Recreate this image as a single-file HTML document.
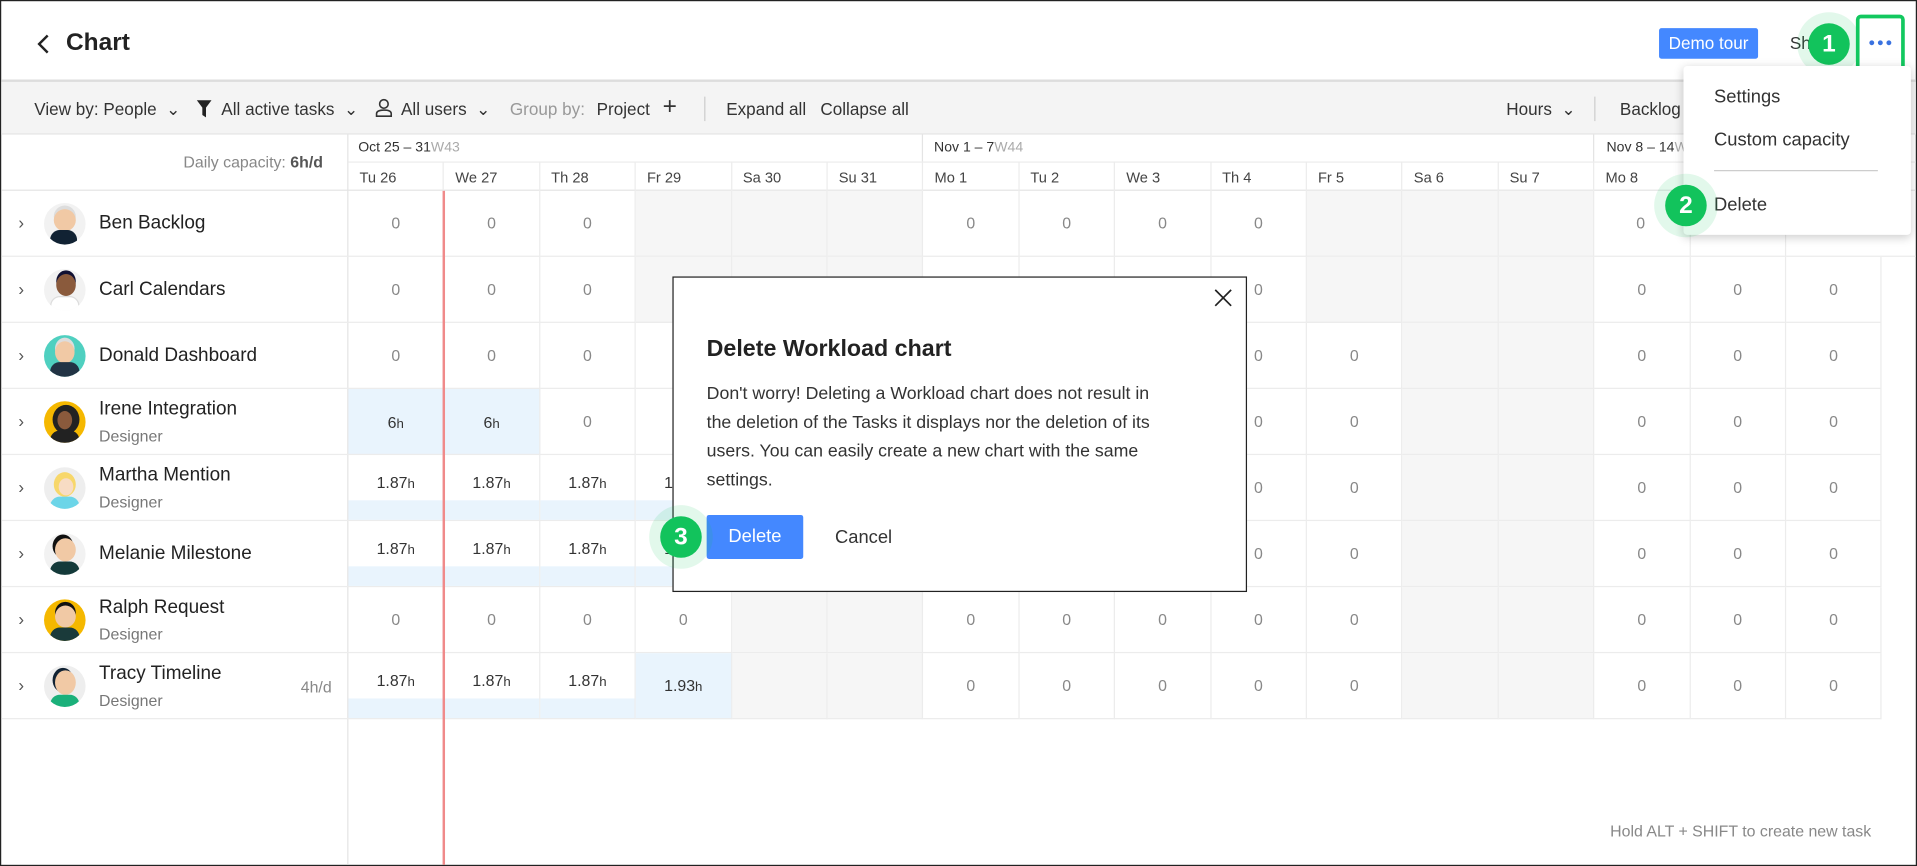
<!DOCTYPE html>
<html><head><meta charset="utf-8"><style>
*{box-sizing:border-box;margin:0;padding:0}
body{width:1917px;height:866px;overflow:hidden;background:#fff;font-family:"Liberation Sans",sans-serif;color:#222}
#w{position:absolute;left:0;top:0;width:1568px;height:708px;transform:scale(1.22258,1.2232);transform-origin:0 0;border:1px solid #222;overflow:hidden}
.a{position:absolute}
.t{position:absolute;white-space:nowrap}
.c{position:absolute;width:78.4px;height:54px;border-right:1px solid #ececec;border-bottom:1px solid #ececec;font-size:13px;color:#888;text-align:center;line-height:54px}
.g{background:#f6f6f6}
.b{background:#e9f4fd;color:#333}
.h{color:#333;line-height:46px}
.h::after{content:"";position:absolute;left:0;right:0;bottom:0;height:16px;background:#e9f4fd}
.d{position:absolute;top:131px;height:24px;width:78.4px;border-right:1px solid #ececec;font-size:12px;color:#444;padding-left:9px;line-height:26px}
.nm{position:absolute;left:80px;font-size:15.5px;color:#222}
.sub{position:absolute;left:80px;font-size:13px;color:#777}
.av{position:absolute;left:35px;width:34px;height:34px;border-radius:50%;overflow:hidden}
.chev{position:absolute;left:14px;font-size:14px;color:#555}
.num{position:absolute;width:34px;height:34px;border-radius:50%;background:#12c35c;color:#fff;font-weight:bold;font-size:20px;text-align:center;line-height:34px;box-shadow:0 0 0 9px rgba(18,195,92,.12)}
.tb{position:absolute;top:80px;font-size:14px;color:#333}
</style></head><body><div id="w">
<svg class="a" style="left:28px;top:26px" width="14" height="18"><path d="M10 2 L3 9 L10 16" stroke="#222" stroke-width="2" fill="none"/></svg>
<div class="t" style="left:53px;top:23px;font-size:20px;font-weight:bold">Chart</div>
<div class="a" style="left:1356px;top:22px;width:81px;height:25px;background:#4488ff;border-radius:2px;color:#fff;font-size:14px;text-align:center;line-height:25px">Demo tour</div>
<div class="t" style="left:1463px;top:26px;font-size:14px;color:#333">Sh</div>
<div class="num" style="left:1478px;top:18px">1</div>
<div class="a" style="left:1517px;top:11px;width:40px;height:46px;border:3px solid #12c85f;border-radius:4px;background:#fff"></div>
<svg class="a" style="left:1527px;top:31px" width="20" height="6"><circle cx="3" cy="3" r="2" fill="#3a72e0"/><circle cx="10" cy="3" r="2" fill="#3a72e0"/><circle cx="17" cy="3" r="2" fill="#3a72e0"/></svg>
<div class="a" style="left:0;top:64px;width:1568px;height:2px;background:#ddd"></div>
<div class="a" style="left:0;top:66px;width:1568px;height:43px;background:#f4f4f4;border-bottom:1px solid #e4e4e4"></div>
<div class="tb" style="left:27px">View by: People &nbsp;⌄</div>
<svg class="a" style="left:159px;top:80px" width="14" height="16"><path d="M1 1H13L8.5 7V15L5.5 13V7Z" fill="#222"/></svg>
<div class="tb" style="left:180px">All active tasks &nbsp;⌄</div>
<svg class="a" style="left:306px;top:79px" width="14" height="16"><circle cx="7" cy="5" r="3.5" stroke="#333" fill="none" stroke-width="1.3"/><path d="M1 15V13Q1 10 7 10Q13 10 13 13V15Z" stroke="#333" fill="none" stroke-width="1.3"/></svg>
<div class="tb" style="left:327px">All users &nbsp;⌄</div>
<div class="tb" style="left:416px;color:#999">Group by:</div>
<div class="tb" style="left:487px">Project</div>
<div class="tb" style="left:541px;font-size:20px;top:75px;color:#333">+</div>
<div class="a" style="left:575px;top:78px;width:1px;height:20px;background:#ccc"></div>
<div class="tb" style="left:593px">Expand all</div>
<div class="tb" style="left:670px">Collapse all</div>
<div class="tb" style="left:1231px">Hours &nbsp;⌄</div>
<div class="a" style="left:1303px;top:78px;width:1px;height:20px;background:#ccc"></div>
<div class="tb" style="left:1324px">Backlog l</div>
<div class="a" style="left:283px;top:109px;width:1px;height:600px;background:#e4e4e4"></div>
<div class="t" style="left:149px;top:124px;font-size:13px;color:#888">Daily capacity: <b style="color:#555">6h/d</b></div>
<div class="a" style="left:0;top:154px;width:1568px;height:1px;background:#e4e4e4"></div>
<div class="t" style="left:292px;top:114px;font-size:11.5px;color:#333">Oct 25 – 31<span style="color:#aaa">W43</span></div>
<div class="t" style="left:763px;top:114px;font-size:11.5px;color:#333">Nov 1 – 7<span style="color:#aaa">W44</span></div>
<div class="t" style="left:1313px;top:114px;font-size:11.5px;color:#333">Nov 8 – 14<span style="color:#aaa">W45</span></div>
<div class="a" style="left:753px;top:109px;width:1px;height:22px;background:#e4e4e4"></div>
<div class="a" style="left:1302px;top:109px;width:1px;height:22px;background:#e4e4e4"></div>
<div class="a" style="left:284px;top:131px;width:1284px;height:1px;background:#ececec"></div>
<div class="d" style="left:284px">Tu 26</div><div class="d" style="left:362.4px">We 27</div><div class="d" style="left:440.8px">Th 28</div><div class="d" style="left:519.2px">Fr 29</div><div class="d" style="left:597.6px">Sa 30</div><div class="d" style="left:676px">Su 31</div><div class="d" style="left:754.4px">Mo 1</div><div class="d" style="left:832.8px">Tu 2</div><div class="d" style="left:911.2px">We 3</div><div class="d" style="left:989.6px">Th 4</div><div class="d" style="left:1068px">Fr 5</div><div class="d" style="left:1146.4px">Sa 6</div><div class="d" style="left:1224.8px">Su 7</div><div class="d" style="left:1303.2px">Mo 8</div><div class="d" style="left:1381.6px">Tu 9</div><div class="d" style="left:1460px">We 10</div>
<div id="rows">
<div class="c" style="left:284px;top:155px">0</div><div class="c" style="left:362.4px;top:155px">0</div><div class="c" style="left:440.8px;top:155px">0</div><div class="c g" style="left:519.2px;top:155px"></div><div class="c g" style="left:597.6px;top:155px"></div><div class="c g" style="left:676px;top:155px"></div><div class="c" style="left:754.4px;top:155px">0</div><div class="c" style="left:832.8px;top:155px">0</div><div class="c" style="left:911.2px;top:155px">0</div><div class="c" style="left:989.6px;top:155px">0</div><div class="c g" style="left:1068px;top:155px"></div><div class="c g" style="left:1146.4px;top:155px"></div><div class="c g" style="left:1224.8px;top:155px"></div><div class="c" style="left:1303.2px;top:155px;text-align:right;padding-right:36px">0</div><div class="c" style="left:1381.6px;top:155px"></div><div class="c" style="left:1460px;top:155px;width:110px"></div>
<div class="c" style="left:284px;top:209px">0</div><div class="c" style="left:362.4px;top:209px">0</div><div class="c" style="left:440.8px;top:209px">0</div><div class="c g" style="left:519.2px;top:209px"></div><div class="c g" style="left:597.6px;top:209px"></div><div class="c g" style="left:676px;top:209px"></div><div class="c" style="left:754.4px;top:209px">0</div><div class="c" style="left:832.8px;top:209px">0</div><div class="c" style="left:911.2px;top:209px">0</div><div class="c" style="left:989.6px;top:209px">0</div><div class="c g" style="left:1068px;top:209px"></div><div class="c g" style="left:1146.4px;top:209px"></div><div class="c g" style="left:1224.8px;top:209px"></div><div class="c" style="left:1303.2px;top:209px">0</div><div class="c" style="left:1381.6px;top:209px">0</div><div class="c" style="left:1460px;top:209px">0</div>
<div class="c" style="left:284px;top:263px">0</div><div class="c" style="left:362.4px;top:263px">0</div><div class="c" style="left:440.8px;top:263px">0</div><div class="c" style="left:519.2px;top:263px"></div><div class="c g" style="left:597.6px;top:263px"></div><div class="c g" style="left:676px;top:263px"></div><div class="c" style="left:754.4px;top:263px">0</div><div class="c" style="left:832.8px;top:263px">0</div><div class="c" style="left:911.2px;top:263px">0</div><div class="c" style="left:989.6px;top:263px">0</div><div class="c" style="left:1068px;top:263px">0</div><div class="c g" style="left:1146.4px;top:263px"></div><div class="c g" style="left:1224.8px;top:263px"></div><div class="c" style="left:1303.2px;top:263px">0</div><div class="c" style="left:1381.6px;top:263px">0</div><div class="c" style="left:1460px;top:263px">0</div>
<div class="c b" style="left:284px;top:317px;line-height:56px">6<small>h</small></div><div class="c b" style="left:362.4px;top:317px;line-height:56px">6<small>h</small></div><div class="c" style="left:440.8px;top:317px">0</div><div class="c" style="left:519.2px;top:317px"></div><div class="c g" style="left:597.6px;top:317px"></div><div class="c g" style="left:676px;top:317px"></div><div class="c" style="left:754.4px;top:317px">0</div><div class="c" style="left:832.8px;top:317px">0</div><div class="c" style="left:911.2px;top:317px">0</div><div class="c" style="left:989.6px;top:317px">0</div><div class="c" style="left:1068px;top:317px">0</div><div class="c g" style="left:1146.4px;top:317px"></div><div class="c g" style="left:1224.8px;top:317px"></div><div class="c" style="left:1303.2px;top:317px">0</div><div class="c" style="left:1381.6px;top:317px">0</div><div class="c" style="left:1460px;top:317px">0</div>
<div class="c h" style="left:284px;top:371px">1.87<small>h</small></div><div class="c h" style="left:362.4px;top:371px">1.87<small>h</small></div><div class="c h" style="left:440.8px;top:371px">1.87<small>h</small></div><div class="c h" style="left:519.2px;top:371px">1.87<small>h</small></div><div class="c g" style="left:597.6px;top:371px"></div><div class="c g" style="left:676px;top:371px"></div><div class="c" style="left:754.4px;top:371px">0</div><div class="c" style="left:832.8px;top:371px">0</div><div class="c" style="left:911.2px;top:371px">0</div><div class="c" style="left:989.6px;top:371px">0</div><div class="c" style="left:1068px;top:371px">0</div><div class="c g" style="left:1146.4px;top:371px"></div><div class="c g" style="left:1224.8px;top:371px"></div><div class="c" style="left:1303.2px;top:371px">0</div><div class="c" style="left:1381.6px;top:371px">0</div><div class="c" style="left:1460px;top:371px">0</div>
<div class="c h" style="left:284px;top:425px">1.87<small>h</small></div><div class="c h" style="left:362.4px;top:425px">1.87<small>h</small></div><div class="c h" style="left:440.8px;top:425px">1.87<small>h</small></div><div class="c h" style="left:519.2px;top:425px">1.87<small>h</small></div><div class="c g" style="left:597.6px;top:425px"></div><div class="c g" style="left:676px;top:425px"></div><div class="c" style="left:754.4px;top:425px">0</div><div class="c" style="left:832.8px;top:425px">0</div><div class="c" style="left:911.2px;top:425px">0</div><div class="c" style="left:989.6px;top:425px">0</div><div class="c" style="left:1068px;top:425px">0</div><div class="c g" style="left:1146.4px;top:425px"></div><div class="c g" style="left:1224.8px;top:425px"></div><div class="c" style="left:1303.2px;top:425px">0</div><div class="c" style="left:1381.6px;top:425px">0</div><div class="c" style="left:1460px;top:425px">0</div>
<div class="c" style="left:284px;top:479px">0</div><div class="c" style="left:362.4px;top:479px">0</div><div class="c" style="left:440.8px;top:479px">0</div><div class="c" style="left:519.2px;top:479px">0</div><div class="c g" style="left:597.6px;top:479px"></div><div class="c g" style="left:676px;top:479px"></div><div class="c" style="left:754.4px;top:479px">0</div><div class="c" style="left:832.8px;top:479px">0</div><div class="c" style="left:911.2px;top:479px">0</div><div class="c" style="left:989.6px;top:479px">0</div><div class="c" style="left:1068px;top:479px">0</div><div class="c g" style="left:1146.4px;top:479px"></div><div class="c g" style="left:1224.8px;top:479px"></div><div class="c" style="left:1303.2px;top:479px">0</div><div class="c" style="left:1381.6px;top:479px">0</div><div class="c" style="left:1460px;top:479px">0</div>
<div class="c h" style="left:284px;top:533px">1.87<small>h</small></div><div class="c h" style="left:362.4px;top:533px">1.87<small>h</small></div><div class="c h" style="left:440.8px;top:533px">1.87<small>h</small></div><div class="c h" style="left:519.2px;top:533px;line-height:54px;background:#e9f4fd">1.93<small>h</small></div><div class="c g" style="left:597.6px;top:533px"></div><div class="c g" style="left:676px;top:533px"></div><div class="c" style="left:754.4px;top:533px">0</div><div class="c" style="left:832.8px;top:533px">0</div><div class="c" style="left:911.2px;top:533px">0</div><div class="c" style="left:989.6px;top:533px">0</div><div class="c" style="left:1068px;top:533px">0</div><div class="c g" style="left:1146.4px;top:533px"></div><div class="c g" style="left:1224.8px;top:533px"></div><div class="c" style="left:1303.2px;top:533px">0</div><div class="c" style="left:1381.6px;top:533px">0</div><div class="c" style="left:1460px;top:533px">0</div>
</div>
<div class="a" style="left:0;top:208px;width:284px;height:1px;background:#ececec"></div>
<div class="a" style="left:0;top:262px;width:284px;height:1px;background:#ececec"></div>
<div class="a" style="left:0;top:316px;width:284px;height:1px;background:#ececec"></div>
<div class="a" style="left:0;top:370px;width:284px;height:1px;background:#ececec"></div>
<div class="a" style="left:0;top:424px;width:284px;height:1px;background:#ececec"></div>
<div class="a" style="left:0;top:478px;width:284px;height:1px;background:#ececec"></div>
<div class="a" style="left:0;top:532px;width:284px;height:1px;background:#ececec"></div>
<div class="a" style="left:0;top:586px;width:284px;height:1px;background:#ececec"></div>
<div class="a" style="left:361px;top:155px;width:1.5px;height:560px;background:#f08a8a"></div>
<div class="chev" style="top:173px">›</div><div class="av" style="top:165px;background:#f2f2f2"><div class="a" style="left:8px;top:5px;width:18px;height:18px;border-radius:50%;background:#f1c9a5;box-shadow:0 -3px 0 #ddd"></div><div class="a" style="left:5px;top:22px;width:22px;height:14px;border-radius:8px 8px 0 0;background:#123"></div></div><div class="nm" style="top:173px">Ben Backlog</div>
<div class="chev" style="top:227px">›</div><div class="av" style="top:219px;background:#f2f2f2"><div class="a" style="left:10px;top:4px;width:16px;height:18px;border-radius:50%;background:#8a5a3c;box-shadow:0 -3px 0 #113"></div><div class="a" style="left:5px;top:22px;width:24px;height:14px;border-radius:8px 8px 0 0;background:#fff;border:1px solid #ddd"></div></div><div class="nm" style="top:227px">Carl Calendars</div>
<div class="chev" style="top:281px">›</div><div class="av" style="top:273px;background:#4fd0c0"><div class="a" style="left:9px;top:5px;width:16px;height:18px;border-radius:50%;background:#f1c9a5;box-shadow:0 -3px 0 #ddd"></div><div class="a" style="left:5px;top:22px;width:24px;height:14px;border-radius:8px 8px 0 0;background:#234"></div></div><div class="nm" style="top:281px">Donald Dashboard</div>
<div class="chev" style="top:335px">›</div><div class="av" style="top:327px;background:#f5b800"><div class="a" style="left:7px;top:3px;width:22px;height:24px;border-radius:50%;background:#222"></div><div class="a" style="left:11px;top:8px;width:12px;height:15px;border-radius:50%;background:#8a5a3c"></div><div class="a" style="left:5px;top:24px;width:24px;height:12px;border-radius:8px 8px 0 0;background:#222"></div></div><div class="nm" style="top:325px">Irene Integration</div><div class="sub" style="top:348px">Designer</div>
<div class="chev" style="top:389px">›</div><div class="av" style="top:381px;background:#eee"><div class="a" style="left:8px;top:4px;width:18px;height:20px;border-radius:50%;background:#f7d76a"></div><div class="a" style="left:12px;top:9px;width:12px;height:14px;border-radius:50%;background:#f8dcc4"></div><div class="a" style="left:5px;top:24px;width:24px;height:12px;border-radius:8px 8px 0 0;background:#6cd5e8"></div></div><div class="nm" style="top:379px">Martha Mention</div><div class="sub" style="top:402px">Designer</div>
<div class="chev" style="top:443px">›</div><div class="av" style="top:435px;background:#f2f2f2"><div class="a" style="left:9px;top:4px;width:17px;height:19px;border-radius:50%;background:#f1c9a5;box-shadow:-2px -3px 0 #111"></div><div class="a" style="left:5px;top:23px;width:24px;height:13px;border-radius:8px 8px 0 0;background:#143a3a"></div></div><div class="nm" style="top:443px">Melanie Milestone</div>
<div class="chev" style="top:497px">›</div><div class="av" style="top:489px;background:#f5b800"><div class="a" style="left:9px;top:5px;width:17px;height:18px;border-radius:50%;background:#f1c9a5;box-shadow:0 -3px 0 #111"></div><div class="a" style="left:5px;top:23px;width:24px;height:13px;border-radius:8px 8px 0 0;background:#1a3a3a"></div></div><div class="nm" style="top:487px">Ralph Request</div><div class="sub" style="top:510px">Designer</div>
<div class="chev" style="top:551px">›</div><div class="av" style="top:543px;background:#eee"><div class="a" style="left:9px;top:4px;width:17px;height:20px;border-radius:50%;background:#f1c9a5;box-shadow:-2px -2px 0 #123"></div><div class="a" style="left:5px;top:24px;width:24px;height:12px;border-radius:8px 8px 0 0;background:#1bb07a"></div></div><div class="nm" style="top:541px">Tracy Timeline</div><div class="sub" style="top:564px">Designer</div>
<div class="t" style="left:245px;top:553px;font-size:13px;color:#888">4h/d</div>
<div class="t" style="left:1316px;top:671px;font-size:13px;color:#888">Hold ALT + SHIFT to create new task</div>
<div class="a" style="left:1376px;top:53px;width:186px;height:138px;background:#fff;border-radius:3px;box-shadow:0 2px 8px rgba(0,0,0,.2)"></div>
<div class="t" style="left:1401px;top:70px;font-size:15px;color:#333">Settings</div>
<div class="t" style="left:1401px;top:105px;font-size:15px;color:#333">Custom capacity</div>
<div class="a" style="left:1401px;top:138px;width:134px;height:1px;background:#ccc"></div>
<div class="t" style="left:1401px;top:158px;font-size:15px;color:#333">Delete</div>
<div class="num" style="left:1361px;top:150px">2</div>
<div class="a" style="left:549px;top:225px;width:470px;height:258px;background:#fff;border:1px solid #222"></div>
<svg class="a" style="left:992px;top:235px" width="15" height="15"><path d="M1 1L14 14M14 1L1 14" stroke="#222" stroke-width="1.4"/></svg>
<div class="t" style="left:577px;top:274px;font-size:19px;font-weight:bold;color:#222">Delete Workload chart</div>
<div class="t" style="left:577px;top:310px;font-size:14.5px;line-height:23.5px;color:#333">Don't worry! Deleting a Workload chart does not result in<br>the deletion of the Tasks it displays nor the deletion of its<br>users. You can easily create a new chart with the same<br>settings.</div>
<div class="a" style="left:577px;top:420px;width:79px;height:36px;background:#4488ff;border-radius:2px;color:#fff;font-size:15px;text-align:center;line-height:36px">Delete</div>
<div class="t" style="left:682px;top:430px;font-size:15px;color:#333">Cancel</div>
<div class="num" style="left:539px;top:421px">3</div>
</div></body></html>
